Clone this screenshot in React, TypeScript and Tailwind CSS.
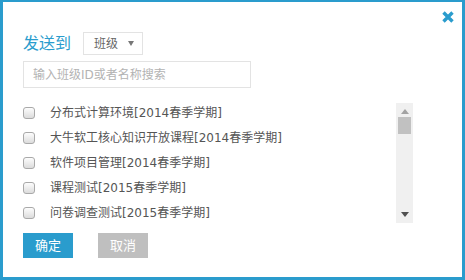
import React from 'react';

const classes = [
  '分布式计算环境[2014春季学期]',
  '大牛软工核心知识开放课程[2014春季学期]',
  '软件项目管理[2014春季学期]',
  '课程测试[2015春季学期]',
  '问卷调查测试[2015春季学期]',
];

const Checkbox: React.FC = () => (
  <span className="block w-[12px] h-[12px] rounded-[3px] border border-[#a9a9a9] bg-gradient-to-b from-[#fdfdfd] to-[#dcdcdc]" />
);

// old-style scrollbar with arrows, drawn by hand
const FakeScrollbar: React.FC = () => (
  <div className="mt-[3px] w-[17px] h-[120px] bg-[#f0f0f0] flex flex-col items-center">
    <svg width="8" height="5" viewBox="0 0 8 5" className="mt-[6px]">
      <path d="M4 0 L8 5 L0 5 Z" fill="#a3a3a3" />
    </svg>
    <div className="mt-[3px] w-[13px] h-[17px] bg-[#c1c1c1]" />
    <div className="flex-1" />
    <svg width="8" height="5" viewBox="0 0 8 5" className="mb-[6px]">
      <path d="M0 0 L8 0 L4 5 Z" fill="#505050" />
    </svg>
  </div>
);

export default function App() {
  return (
    <div
      className="relative w-[465px] h-[280px] bg-white border-[#2a9ccd] border-t-[2px] border-l-[3px] border-r-[3px] border-b-[3px] px-[20px] pt-[30px]"
      style={{ fontFamily: '"DejaVu Sans", "Noto Sans CJK SC", sans-serif' }}
    >
      <button className="absolute top-[9px] right-[8px] w-[12px] h-[12px]">
        <svg width="12" height="12" viewBox="0 0 12 12">
          <path d="M1.5 1.5 L10.5 10.5 M10.5 1.5 L1.5 10.5" stroke="#2a9ccd" strokeWidth="3.4" strokeLinecap="butt" />
        </svg>
      </button>

      <div className="flex items-center gap-[12px] h-[23px]">
        <span className="text-[16px] leading-none text-[#2a9ccd]">发送到</span>
        <div className="w-[60px] h-[23px] border border-[#e3e3e3] flex items-center pl-[10px] pr-[8px]">
          <span className="text-[12px] text-[#666] leading-none">班级</span>
          <span className="flex-1" />
          <svg width="6" height="5" viewBox="0 0 6 5">
            <path d="M0 0 L6 0 L3 5 Z" fill="#777" />
          </svg>
        </div>
      </div>

      <div className="mt-[6px] w-[228px] h-[27px] border border-[#e3e3e3] flex items-center px-[9px]">
        <span className="text-[12px] text-[#b3b3b3] leading-none">输入班级ID或者名称搜索</span>
      </div>

      <div className="mt-[12px] w-[390px] flex">
        <ul className="flex-1">
          {classes.map((name) => (
            <li key={name} className="h-[25px] flex items-center gap-[15px]">
              <Checkbox />
              <span className="text-[12px] text-[#555] leading-none">{name}</span>
            </li>
          ))}
        </ul>
        <FakeScrollbar />
      </div>

      <div className="mt-[8px] flex gap-[25px]">
        <button className="w-[50px] h-[25px] bg-[#2a9ccd] text-white text-[13px]">确定</button>
        <button className="w-[50px] h-[25px] bg-[#bfbfbf] text-white text-[13px]">取消</button>
      </div>
    </div>
  );
}
